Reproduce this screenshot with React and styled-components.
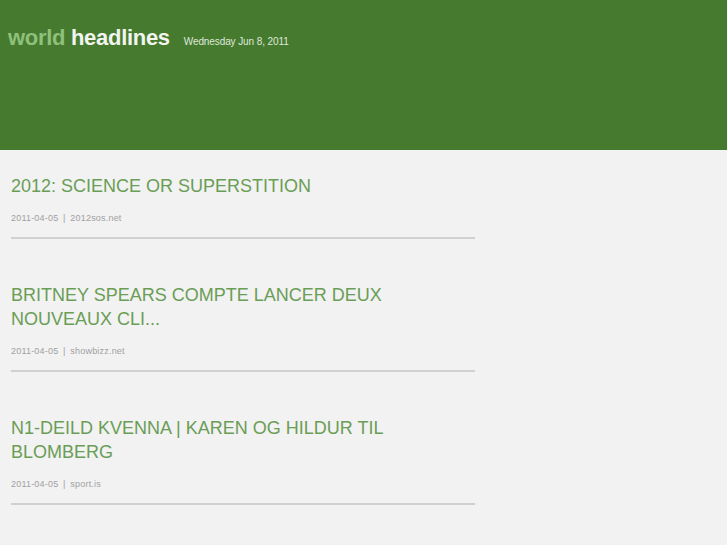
import React from 'react'
import styled, { createGlobalStyle } from 'styled-components';

const items = [
    { title: '2012: SCIENCE OR SUPERSTITION', date: '2011-04-05', source: '2012sos.net' },
    { title: 'BRITNEY SPEARS COMPTE LANCER DEUX NOUVEAUX CLI...', date: '2011-04-05', source: 'showbizz.net' },
    { title: 'N1-DEILD KVENNA | KAREN OG HILDUR TIL BLOMBERG', date: '2011-04-05', source: 'sport.is' },
];

function App() {
    return (
        <>
            <Global />
            <Header>
                <Brand>
                    <Logo><span className='world'>world</span> headlines</Logo>
                    <DateLine>Wednesday Jun 8, 2011</DateLine>
                </Brand>
            </Header>
            <Main>
                {items.map((item, i) => (
                    <Story key={i} first={i === 0}>
                        <Title>{item.title}</Title>
                        <Meta>{item.date} <span className='sep'>|</span> {item.source}</Meta>
                    </Story>
                ))}
            </Main>
        </>
    )
}

const Global = createGlobalStyle`
    html, body {
        margin: 0;
        padding: 0;
        background: #f2f2f2;
        font-family: "Liberation Sans", Arial, sans-serif;
    }
`

const Header = styled.header`
    height: 150px;
    background: #467b2f;
    padding: 0 8px;
    box-sizing: border-box;
`

const Brand = styled.div`
    display: flex;
    align-items: baseline;
    gap: 14px;
    padding-top: 25px;
`

const Logo = styled.h1`
    margin: 0;
    font-size: 22px;
    line-height: 26px;
    font-weight: bold;
    letter-spacing: -0.3px;
    color: #f2f4ef;

    .world {
        color: #8fc07c;
    }
`

const DateLine = styled.div`
    font-size: 10px;
    letter-spacing: -0.1px;
    color: #dfe8da;
`

const Main = styled.main`
    width: 464px;
    padding-left: 11px;
`

const Story = styled.article`
    padding-top: ${props => props.first ? '24px' : '44px'};
    border-bottom: 2px solid #d0d0d0;
`

const Title = styled.h2`
    margin: 0;
    font-size: 18px;
    line-height: 24px;
    font-weight: normal;
    color: #6a9d56;
`

const Meta = styled.p`
    margin: 13px 0 12px;
    font-size: 9px;
    line-height: 14px;
    letter-spacing: 0.2px;
    color: #a0a0a0;

    .sep {
        padding: 0 2px;
    }
`

export default App
